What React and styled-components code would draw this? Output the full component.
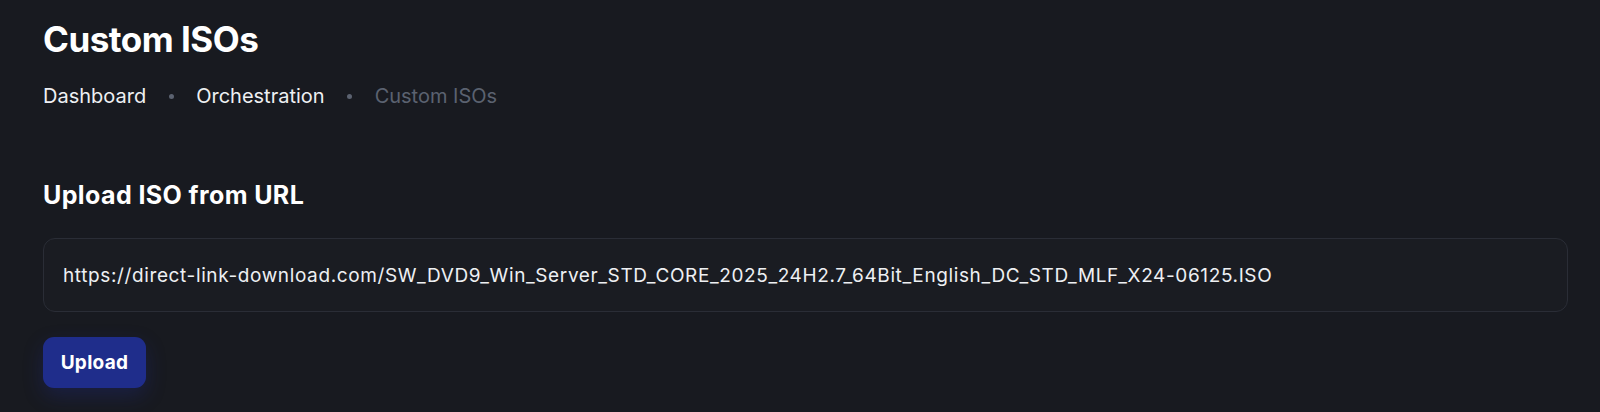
import React from "react";
import styled, { createGlobalStyle } from "styled-components";

const GlobalStyle = createGlobalStyle`
  html, body {
    margin: 0;
    background: #181a20;
  }
  body {
    font-family: Inter, "Noto Sans", sans-serif;
    color: #f3f4f6;
  }
`;

const Page = styled.div`
  min-height: 412px;
  padding: 18px 32px 0 43px;
  box-sizing: border-box;
`;

const Title = styled.h1`
  margin: 0;
  font-size: 35px;
  line-height: 42px;
  font-weight: 700;
  color: #ffffff;
  letter-spacing: -0.5px;
`;

const Crumbs = styled.nav`
  display: flex;
  align-items: center;
  gap: 22.5px;
  margin-top: 24px;
  font-size: 20px;
  line-height: 24px;
`;

const Crumb = styled.span`
  color: ${props => (props.current ? "#5b6270" : "#eef0f3")};
`;

const Dot = styled.span`
  width: 5px;
  height: 5px;
  border-radius: 50%;
  background: #5b6270;
`;

const Section = styled.section`
  margin-top: 72px;
  display: flex;
  flex-direction: column;
  align-items: flex-start;
`;

const Subtitle = styled.h2`
  margin: 0;
  font-size: 25px;
  line-height: 30px;
  font-weight: 700;
  color: #ffffff;
  letter-spacing: 0.4px;
`;

const UrlInput = styled.input`
  margin-top: 28px;
  width: 100%;
  height: 74px;
  box-sizing: border-box;
  padding: 0 19px;
  border: 1px solid #2a2d36;
  border-radius: 12px;
  background: #1a1c22;
  color: #eef0f3;
  font-family: Inter, "Noto Sans", sans-serif;
  font-size: 19px;
  letter-spacing: 0.62px;
  outline: none;
`;

const UploadButton = styled.button`
  margin-top: 25px;
  width: 103px;
  height: 51px;
  border: none;
  border-radius: 11px;
  background: #1f2d8b;
  color: #ffffff;
  font-family: Inter, "Noto Sans", sans-serif;
  font-size: 19px;
  font-weight: 700;
  letter-spacing: 0.3px;
  cursor: pointer;
  box-shadow: 0 8px 20px rgba(31, 45, 139, 0.32);
`;

const url =
  "https://direct-link-download.com/SW_DVD9_Win_Server_STD_CORE_2025_24H2.7_64Bit_English_DC_STD_MLF_X24-06125.ISO";

const App = () => {
  return (
    <Page>
      <GlobalStyle />
      <Title>Custom ISOs</Title>
      <Crumbs>
        <Crumb>Dashboard</Crumb>
        <Dot />
        <Crumb>Orchestration</Crumb>
        <Dot />
        <Crumb current>Custom ISOs</Crumb>
      </Crumbs>
      <Section>
        <Subtitle>Upload ISO from URL</Subtitle>
        <UrlInput defaultValue={url} />
        <UploadButton>Upload</UploadButton>
      </Section>
    </Page>
  );
};

export default App;
